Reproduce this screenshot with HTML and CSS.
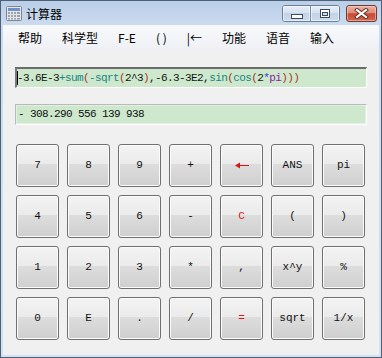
FILE: index.html
```html
<!DOCTYPE html>
<html lang="zh">
<head>
<meta charset="utf-8">
<title>计算器</title>
<link rel="stylesheet" href="styles.css">
</head>
<body>
<div class="window">
  <div class="titlebar">
    <svg class="appicon" width="16" height="15" viewBox="0 0 16 15">
      <rect x="0.5" y="0.5" width="15" height="14" rx="1" fill="#e4e6ea" stroke="#7d8590"/>
      <rect x="2" y="2" width="12" height="3" fill="#6f93c6"/>
      <g fill="#9aa2ad">
        <rect x="2" y="6" width="2" height="2"/><rect x="5" y="6" width="2" height="2"/><rect x="8" y="6" width="2" height="2"/><rect x="11" y="6" width="3" height="2"/>
        <rect x="2" y="9" width="2" height="2"/><rect x="5" y="9" width="2" height="2"/><rect x="8" y="9" width="2" height="2"/><rect x="11" y="9" width="3" height="2"/>
        <rect x="2" y="12" width="2" height="1.5"/><rect x="5" y="12" width="2" height="1.5"/><rect x="8" y="12" width="2" height="1.5"/><rect x="11" y="12" width="3" height="1.5"/>
      </g>
    </svg>
    <span class="title">计算器</span>
    <div class="controls">
      <div class="ctl-group">
        <div class="ctl ctl-min">
          <svg width="12" height="5" viewBox="0 0 12 5"><rect x="0.5" y="0.5" width="11" height="4" fill="#fff" stroke="#3b4a5e"/></svg>
        </div>
        <div class="ctl ctl-max">
          <svg width="10" height="9" viewBox="0 0 10 9"><rect x="0.5" y="0.5" width="9" height="8" fill="#fff" stroke="#3b4a5e"/><rect x="2.5" y="3.5" width="5" height="3" fill="#cfdbea" stroke="#3b4a5e"/></svg>
        </div>
      </div>
      <div class="ctl ctl-close">
        <svg width="15" height="11" viewBox="0 0 15 11">
          <path d="M3 2 L12 9 M12 2 L3 9" stroke="#5a2a22" stroke-width="4" stroke-linecap="square"/>
          <path d="M3 2 L12 9 M12 2 L3 9" stroke="#fff" stroke-width="2.2" stroke-linecap="square"/>
        </svg>
      </div>
    </div>
  </div>
  <div class="client">
    <div class="menubar">
      <span class="menu-item">帮助</span>
      <span class="menu-item">科学型</span>
      <span class="menu-item">F-E</span>
      <span class="menu-item">( )</span>
      <span class="menu-item">|←</span>
      <span class="menu-item">功能</span>
      <span class="menu-item">语音</span>
      <span class="menu-item">输入</span>
    </div>
    <div class="expr"><span class="caret"></span><span class="n">-3.6E-3</span><span class="f">+sum</span><span class="p">(</span><span class="f">-sqrt</span><span class="p">(</span><span class="n">2^3</span><span class="p">)</span><span class="n">,-6.3-3E2,</span><span class="f">sin</span><span class="p">(</span><span class="f">cos</span><span class="p">(</span><span class="n">2</span><span class="o">*</span><span class="k">pi</span><span class="p">)))</span></div>
    <div class="result">- 308.290 556 139 938</div>
    <div class="keys">
      <div class="key">7</div>
      <div class="key">8</div>
      <div class="key">9</div>
      <div class="key">+</div>
      <div class="key red"><svg width="14" height="7" viewBox="0 0 14 7"><path d="M3 3.5 H14" stroke="#d81818" stroke-width="1"/><path d="M0 3.5 L5 0.5 L5 6.5 Z" fill="#d81818"/></svg></div>
      <div class="key">ANS</div>
      <div class="key">pi</div>

      <div class="key">4</div>
      <div class="key">5</div>
      <div class="key">6</div>
      <div class="key">-</div>
      <div class="key red">C</div>
      <div class="key">(</div>
      <div class="key">)</div>

      <div class="key">1</div>
      <div class="key">2</div>
      <div class="key">3</div>
      <div class="key">*</div>
      <div class="key">,</div>
      <div class="key">x^y</div>
      <div class="key">%</div>

      <div class="key">0</div>
      <div class="key">E</div>
      <div class="key">.</div>
      <div class="key">/</div>
      <div class="key red">=</div>
      <div class="key">sqrt</div>
      <div class="key">1/x</div>
    </div>
  </div>
</div>
</body>
</html>
```
FILE: styles.css
```css
html, body {
  margin: 0;
  padding: 0;
}

body {
  width: 382px;
  height: 358px;
  overflow: hidden;
  background: #ffffff;
}

.window {
  box-sizing: border-box;
  width: 382px;
  height: 358px;
  border: 1px solid #4f6177;
  padding: 0 2px 2px 2px;
  display: flex;
  flex-direction: column;
  background: linear-gradient(#b9cee8 0px, #cbdbef 24px, #d3e1f2 100%);
}

.titlebar {
  flex: none;
  height: 24px;
  display: flex;
  align-items: center;
  padding-left: 3px;
}

.appicon {
  display: block;
  margin-top: 1px;
}

.title {
  margin-left: 4px;
  font: 12px "Noto Sans CJK SC", sans-serif;
  color: #000;
  line-height: 16px;
  margin-top: 1px;
}

.controls {
  margin-left: auto;
  margin-right: 2px;
  display: flex;
  align-items: flex-start;
  align-self: flex-start;
  margin-top: 4px;
  gap: 6px;
}

.ctl-group {
  display: flex;
  border: 1px solid #6c7f99;
  border-radius: 3px;
  overflow: hidden;
}

.ctl {
  height: 15px;
  display: flex;
  align-items: center;
  justify-content: center;
  box-sizing: border-box;
}

.ctl svg {
  display: block;
}

.ctl-min, .ctl-max {
  width: 28px;
  background: linear-gradient(#e6eef8 0%, #d6e1ef 45%, #c3d3e7 50%, #ccdaec 100%);
  box-shadow: inset 0 0 0 1px rgba(255, 255, 255, 0.55);
}

.ctl-min {
  border-right: 1px solid #7d8fa8;
  align-items: flex-end;
  padding-bottom: 2px;
}

.ctl-close {
  width: 31px;
  height: 17px;
  border: 1px solid #6e3b33;
  border-radius: 3px;
  background: linear-gradient(#eeb2a4 0%, #dd8c79 45%, #c94a31 52%, #d2674e 100%);
  box-shadow: inset 0 0 0 1px rgba(255, 220, 210, 0.5);
}

.client {
  flex: 1;
  background: #f0f0f0;
  display: flex;
  flex-direction: column;
}

.menubar {
  flex: none;
  height: 25px;
  display: flex;
  align-items: center;
  padding-left: 5px;
  background: linear-gradient(#f8f9fb, #f2f4f7 60%, #eef0f3);
  font: 12px "Noto Sans CJK SC", sans-serif;
  color: #000;
}

.menu-item {
  padding: 0 10px;
  line-height: 18px;
  white-space: pre;
}

.expr, .result {
  box-sizing: border-box;
  width: 352px;
  height: 21px;
  margin-left: 12px;
  background: #cde8cd;
  font: 11px "Liberation Mono", monospace;
  letter-spacing: -0.6px;
  line-height: 17px;
  white-space: pre;
  color: #111;
}

.expr {
  margin-top: 17px;
  border-top: 2px solid #6b6b6b;
  border-left: 2px solid #7a7a7a;
  border-right: 1px solid #ffffff;
  border-bottom: 1px solid #ffffff;
  padding-left: 0;
  display: flex;
  align-items: center;
}

.caret {
  display: inline-block;
  width: 1px;
  height: 14px;
  background: #000;
  margin-right: -1px;
}

.expr .n { color: #141414; }
.expr .f { color: #178585; }
.expr .p { color: #b0301e; }
.expr .o { color: #3b35c8; }
.expr .k { color: #8a22a6; }

.result {
  margin-top: 16px;
  border: 1px solid #b9b9b9;
  border-right-color: #ffffff;
  border-bottom-color: #ffffff;
  box-shadow: inset 0 0 0 1px #e4efe4;
  padding-left: 2px;
  line-height: 19px;
}

.keys {
  margin-top: 19px;
  margin-left: 13px;
  display: grid;
  grid-template-columns: repeat(7, 43px);
  grid-auto-rows: 43px;
  column-gap: 8px;
  row-gap: 8px;
}

.key {
  box-sizing: border-box;
  border: 1px solid #707070;
  border-radius: 3px;
  background: linear-gradient(#f3f3f3 0%, #ebebeb 46%, #dddddd 47%, #cfcfcf 100%);
  box-shadow: inset 0 0 0 1px #fbfbfb;
  display: flex;
  align-items: center;
  justify-content: center;
  font: 11px "Liberation Mono", monospace;
  color: #111;
  padding-bottom: 1px;
}

.key.red {
  color: #d81818;
}

.key svg {
  display: block;
}
```
